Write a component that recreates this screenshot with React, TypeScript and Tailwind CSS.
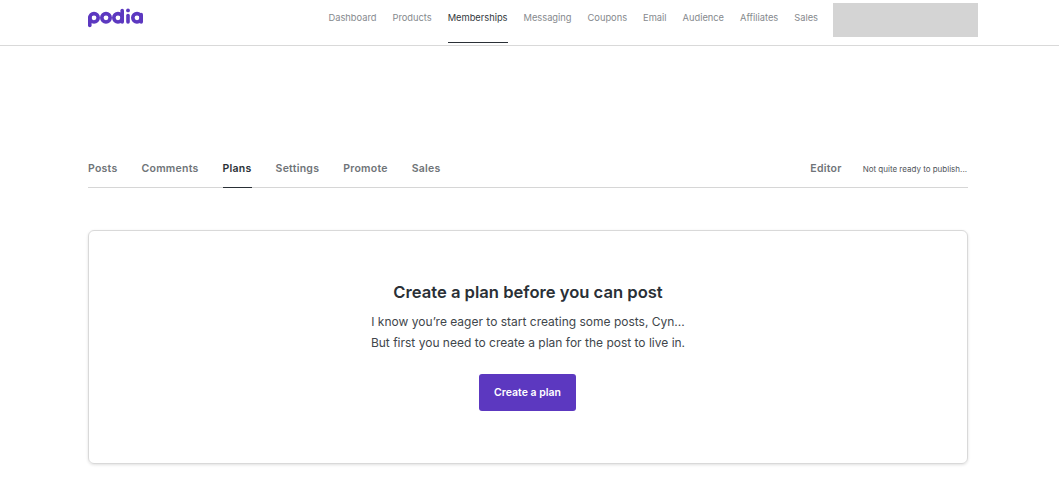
const nav = ["Dashboard", "Products", "Memberships", "Messaging", "Coupons", "Email", "Audience", "Affiliates", "Sales"];
const tabs = ["Posts", "Comments", "Plans", "Settings", "Promote", "Sales"];

function Logo() {
  return (
    <svg role="img" aria-label="podia" width="56" height="20" viewBox="0 0 56 20" className="mt-[8px]" fill="none" stroke="#5c38c0" strokeWidth="3.6">
      <circle cx="6" cy="9.8" r="4.2" />
      <line x1="1.8" y1="9.5" x2="1.8" y2="17.4" strokeLinecap="round" />
      <circle cx="18" cy="9.8" r="4.2" />
      <circle cx="30" cy="9.8" r="4.2" />
      <line x1="34.2" y1="2.6" x2="34.2" y2="14" strokeLinecap="round" />
      <line x1="40" y1="7.5" x2="40" y2="14" strokeLinecap="round" />
      <circle cx="40" cy="2.4" r="1.9" fill="#5c38c0" stroke="none" />
      <circle cx="49" cy="9.8" r="4.2" />
      <line x1="53.2" y1="6.5" x2="53.2" y2="14" strokeLinecap="round" />
    </svg>
  );
}

export default function App() {
  return (
    <div className="min-h-[485px] bg-white font-['Inter',sans-serif] overflow-hidden">
      <header className="h-[46px] border-b border-[#d9d9d9] flex justify-between pl-[88px] pr-[81px]">
        <Logo />
        <div className="flex">
          <nav className="flex gap-4 mr-[15px]">
            {nav.map((n) => (
              <a key={n} className={`h-[43px] flex items-center pb-[6px] border-b text-[9.3px] ${n === "Memberships" ? "text-[#33383c] border-[#2a3036]" : "text-[#85898d] border-transparent"}`}>
                {n}
              </a>
            ))}
          </nav>
          <div className="w-[145px] h-[34px] mt-[3px] bg-[#d4d4d4]" />
        </div>
      </header>
      <main className="mx-[88px] mt-[106px] w-[880px]">
        <div className="h-[36px] border-b border-[#d6d6d6] flex justify-between">
          <div className="flex gap-6">
            {tabs.map((t) => (
              <a key={t} className={`h-[36px] flex items-center pb-px border-b text-[10.5px] tracking-[0.25px] font-semibold ${t === "Plans" ? "text-[#2a3036] border-[#2a3036]" : "text-[#6f7478] border-transparent"}`}>
                {t}
              </a>
            ))}
          </div>
          <div className="flex items-center pb-px">
            <span className="text-[10.5px] tracking-[0.25px] font-semibold text-[#6f7478] mr-[21px]">Editor</span>
            <span className="text-[8px] text-[#50555a] mr-px">Not quite ready to publish...</span>
          </div>
        </div>
        <section className="mt-[42px] h-[234px] border border-[#d9d9d9] rounded-[6px] shadow-[0_1px_3px_rgba(0,0,0,0.12)] flex flex-col items-center pt-[50px]">
          <h1 className="text-[16.6px] leading-[22px] font-semibold text-[#2a3036]">Create a plan before you can post</h1>
          <p className="mt-[9px] text-[12px] leading-[20.5px] text-[#41464b] text-center">
            I know you’re eager to start creating some posts, Cyn...
            <br />
            But first you need to create a plan for the post to live in.
          </p>
          <button className="mt-[21px] mr-px w-[97px] h-[37px] rounded-[3px] bg-[#5c38c0] text-white text-[10.5px] font-semibold">Create a plan</button>
        </section>
      </main>
    </div>
  );
}
